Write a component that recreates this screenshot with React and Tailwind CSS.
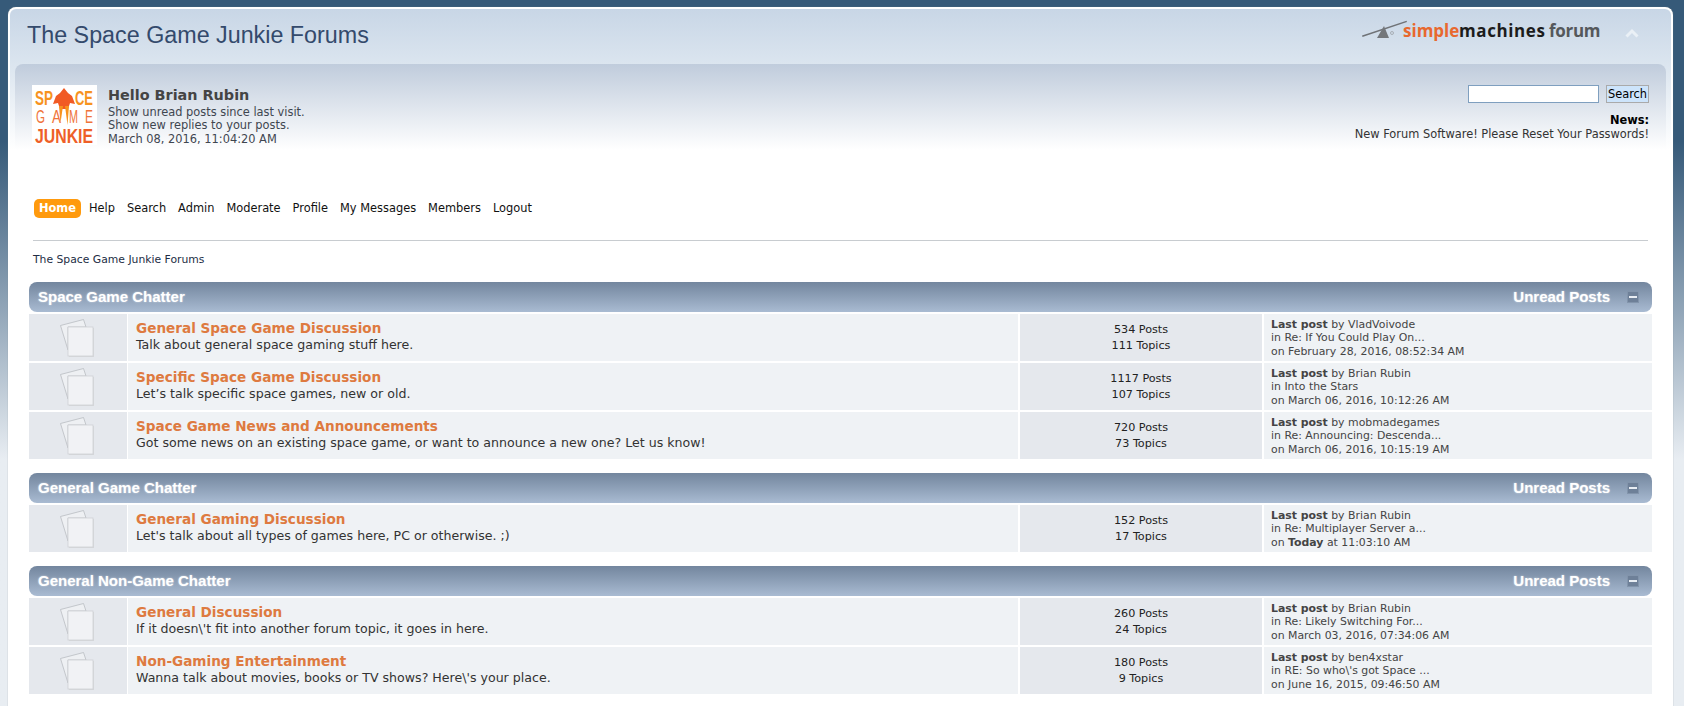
const sections = [
  {
    title: "Space Game Chatter",
    boards: [
      {
        name: "General Space Game Discussion",
        desc: "Talk about general space gaming stuff here.",
        posts: "534 Posts",
        topics: "111 Topics",
        by: "VladVoivode",
        topic: "Re: If You Could Play On...",
        on: "on February 28, 2016, 08:52:34 AM",
      },
      {
        name: "Specific Space Game Discussion",
        desc: "Let’s talk specific space games, new or old.",
        posts: "1117 Posts",
        topics: "107 Topics",
        by: "Brian Rubin",
        topic: "Into the Stars",
        on: "on March 06, 2016, 10:12:26 AM",
      },
      {
        name: "Space Game News and Announcements",
        desc: "Got some news on an existing space game, or want to announce a new one? Let us know!",
        posts: "720 Posts",
        topics: "73 Topics",
        by: "mobmadegames",
        topic: "Re: Announcing: Descenda...",
        on: "on March 06, 2016, 10:15:19 AM",
      },
    ],
  },
  {
    title: "General Game Chatter",
    boards: [
      {
        name: "General Gaming Discussion",
        desc: "Let's talk about all types of games here, PC or otherwise. ;)",
        posts: "152 Posts",
        topics: "17 Topics",
        by: "Brian Rubin",
        topic: "Re: Multiplayer Server a...",
        today: "at 11:03:10 AM",
      },
    ],
  },
  {
    title: "General Non-Game Chatter",
    boards: [
      {
        name: "General Discussion",
        desc: "If it doesn\\'t fit into another forum topic, it goes in here.",
        posts: "260 Posts",
        topics: "24 Topics",
        by: "Brian Rubin",
        topic: "Re: Likely Switching For...",
        on: "on March 03, 2016, 07:34:06 AM",
      },
      {
        name: "Non-Gaming Entertainment",
        desc: "Wanna talk about movies, books or TV shows? Here\\'s your place.",
        posts: "180 Posts",
        topics: "9 Topics",
        by: "ben4xstar",
        topic: "RE: So who\\'s got Space ...",
        on: "on June 16, 2015, 09:46:50 AM",
      },
    ],
  },
];

const navItems = ["Help", "Search", "Admin", "Moderate", "Profile", "My Messages", "Members", "Logout"];

const PagesIcon = () => (
  <svg width="34" height="38" viewBox="0 0 34 38" fill="none" className="mr-[2px]">
    <path d="M0.5 6.5 L23.5 0.5 L26 8 L8 8 L8 31 Z" fill="#eef0f3" stroke="#b9bdc2" strokeWidth="0.8" />
    <rect x="9" y="9" width="25" height="29" fill="#d5d7da" />
    <rect x="8" y="8" width="25" height="29" fill="#f1f2f5" stroke="#cfd1d5" strokeWidth="0.8" />
  </svg>
);

const Logo = () => (
  <svg width="65" height="60" viewBox="0 0 65 60" className="shrink-0 overflow-visible bg-white [font-family:'Liberation_Sans',sans-serif]">
    <g fill="#f7931e" fontSize="21" fontWeight="700">
      <text x="3" y="20" textLength="18" lengthAdjust="spacingAndGlyphs">SP</text>
      <text x="43" y="20" textLength="18" lengthAdjust="spacingAndGlyphs">CE</text>
    </g>
    <g fill="#f0743a" fontSize="18">
      <text x="4" y="38" textLength="9" lengthAdjust="spacingAndGlyphs">G</text>
      <text x="20" y="38" textLength="9" lengthAdjust="spacingAndGlyphs">A</text>
      <text x="37" y="38" textLength="9" lengthAdjust="spacingAndGlyphs">M</text>
      <text x="53" y="38" textLength="8" lengthAdjust="spacingAndGlyphs">E</text>
    </g>
    <text x="3" y="58" fill="#ee5f28" fontSize="20" fontWeight="700" textLength="58" lengthAdjust="spacingAndGlyphs">JUNKIE</text>
    <path d="M32 3 L36 8 L40 11 L43 19 L38 18 L36 24 L28 24 L26 18 L21 19 L24 11 L28 8 Z" fill="#f15a24" />
    <path d="M27 21 L31 21 L28.5 38 Z M33 21 L37 21 L35.5 40 Z" fill="#f7931e" />
  </svg>
);

const SmfLogo = () => (
  <div className="flex h-[22px] items-end whitespace-nowrap [font-family:'Open_Sans',sans-serif]">
    <svg width="42" height="22" viewBox="0 0 42 22" className="overflow-visible">
      <path d="M1 15.5 L45.5 0.7 L46 2 L1.5 16.9 Z" fill="#6f7276" />
      <path d="M23 6 L28 18 L16 18 Z" fill="#74777b" />
      <circle cx="31" cy="13" r="1.5" fill="none" stroke="#8d9094" strokeWidth="0.6" />
    </svg>
    <div className="flex text-[17px] leading-[22px] font-bold">
      <span className="w-[56px] text-[#e8682e]">simple</span>
      <span className="w-[85px] tracking-[0.6px] text-[#1c1c1c]">machines</span>
      <span className="ml-[5px] w-[50px] tracking-[-0.3px] text-[#55585b]">forum</span>
    </div>
  </div>
);

const BoardRow = ({ board }) => (
  <div className="mt-[2px] flex h-[47px]">
    <div className="flex w-[98px] items-center justify-center bg-[#e5e8ed]">
      <PagesIcon />
    </div>
    <div className="ml-[1px] w-[890px] bg-[#eff2f5] pl-[8px] pt-[5px] text-[12.6px] leading-[16px] text-[#333333]">
      <div className="text-[13.6px] leading-[18px] font-bold text-[#de7a40]">{board.name}</div>
      <div>{board.desc}</div>
    </div>
    <div className="ml-[2px] flex w-[242px] flex-col items-center justify-center bg-[#e5e8ed] text-[11.2px] leading-[16px] text-[#222222]">
      <div>{board.posts}</div>
      <div>{board.topics}</div>
    </div>
    <div className="ml-[2px] flex-1 bg-[#eff2f5] pl-[7px] pt-[4px] text-[10.9px] leading-[13.3px] text-[#444444]">
      <div>
        <span className="font-bold">Last post</span> by {board.by}
      </div>
      <div>in {board.topic}</div>
      {board.today ? (
        <div>
          on <span className="font-bold">Today</span> {board.today}
        </div>
      ) : (
        <div>{board.on}</div>
      )}
    </div>
  </div>
);

const Section = ({ section }) => (
  <div className="mb-[14px]">
    <div className="flex h-[30px] items-center justify-between rounded-[8px] bg-gradient-to-b from-[#73869e] to-[#a9bbd2] pl-[9px] pr-[13px] text-[15px] font-bold text-white [font-family:'Liberation_Sans',sans-serif] [text-shadow:0_0_2px_rgba(255,255,255,0.6)]">
      <div>{section.title}</div>
      <div className="flex items-center gap-[17px]">
        <span>Unread Posts</span>
        <span className="flex h-[12px] w-[12px] items-center justify-center border border-[#8294ab] bg-[#6e8098]">
          <span className="h-[2px] w-[8px] bg-[#e8edf3]" />
        </span>
      </div>
    </div>
    {section.boards.map((board) => (
      <BoardRow key={board.name} board={board} />
    ))}
  </div>
);

export default function App() {
  return (
    <div className="h-[706px] overflow-hidden bg-gradient-to-b from-[#365a79] from-20% to-[#e8edf2] to-65% pl-[8px] pr-[11px] pt-[7px] [font-family:'DejaVu_Sans',sans-serif]">
      <div className="h-[720px] rounded-t-[8px] border-x-2 border-t-2 border-white bg-white shadow-[0_0_1px_#7c8288]">
        <div className="flex h-[55px] items-center justify-between rounded-t-[6px] bg-gradient-to-b from-[#c8d6e6] to-[#dbe5ef] pl-[17px] pr-[32px]">
          <h1 className="mb-[2px] text-[23.3px] leading-none text-[#344a6c] [font-family:'Liberation_Sans',sans-serif]">
            The Space Game Junkie Forums
          </h1>
          <div className="mb-[12px] flex items-center gap-[26px]">
            <SmfLogo />
            <svg width="14" height="10" viewBox="0 0 14 10" fill="none" className="mt-[4px]">
              <path d="M1.5 8.5 L7 3 L12.5 8.5" stroke="#eaf0f6" strokeWidth="3" />
            </svg>
          </div>
        </div>

        <div className="bg-gradient-to-b from-[#dbe5ef] to-white">
          <div className="mx-[5px] flex h-[86px] justify-between rounded-t-[8px] bg-gradient-to-b from-[#c0ccdc] to-white pl-[17px] pr-[17px] pt-[21px]">
            <div className="flex">
              <Logo />
              <div className="ml-[11px] mt-[1px] text-[11.4px] leading-[13.4px] text-[#3f4650]">
                <div className="mb-[2px] text-[14.4px] leading-[18px] font-bold text-[#444444]">Hello Brian Rubin</div>
                <div>Show unread posts since last visit.</div>
                <div>Show new replies to your posts.</div>
                <div>March 08, 2016, 11:04:20 AM</div>
              </div>
            </div>
            <div className="text-right text-[11.4px] leading-[14px] text-[#333333]">
              <div className="flex justify-end gap-[7px]">
                <div className="h-[18px] w-[131px] border border-[#7f9fbf] bg-white" />
                <div className="flex h-[18px] w-[43px] items-center justify-center border border-[#aaaaaa] bg-[#cde4fb] text-black">
                  Search
                </div>
              </div>
              <div className="mt-[10px] font-bold text-black">News:</div>
              <div>New Forum Software! Please Reset Your Passwords!</div>
            </div>
          </div>
        </div>

        <div className="px-[19px]">
          <div className="ml-[5px] mt-[49px] flex h-[19px] items-center text-[11.4px] text-[#111111]">
            <div className="flex h-[19px] w-[47px] items-center justify-center rounded-[5px] bg-[#ff9a0d] font-bold text-white">Home</div>
            <div className="ml-[8px] flex gap-[12px] pt-[1px]">
              {navItems.map((item) => (
                <span key={item}>{item}</span>
              ))}
            </div>
          </div>
          <div className="mx-[4px] mt-[22px] border-t border-[#c8ccd0]" />
          <div className="ml-[4px] mt-[12px] text-[10.8px] leading-[14px] text-[#222d44]">The Space Game Junkie Forums</div>
          <div className="mt-[15px]">
            {sections.map((section) => (
              <Section key={section.title} section={section} />
            ))}
          </div>
        </div>
      </div>
    </div>
  );
}
